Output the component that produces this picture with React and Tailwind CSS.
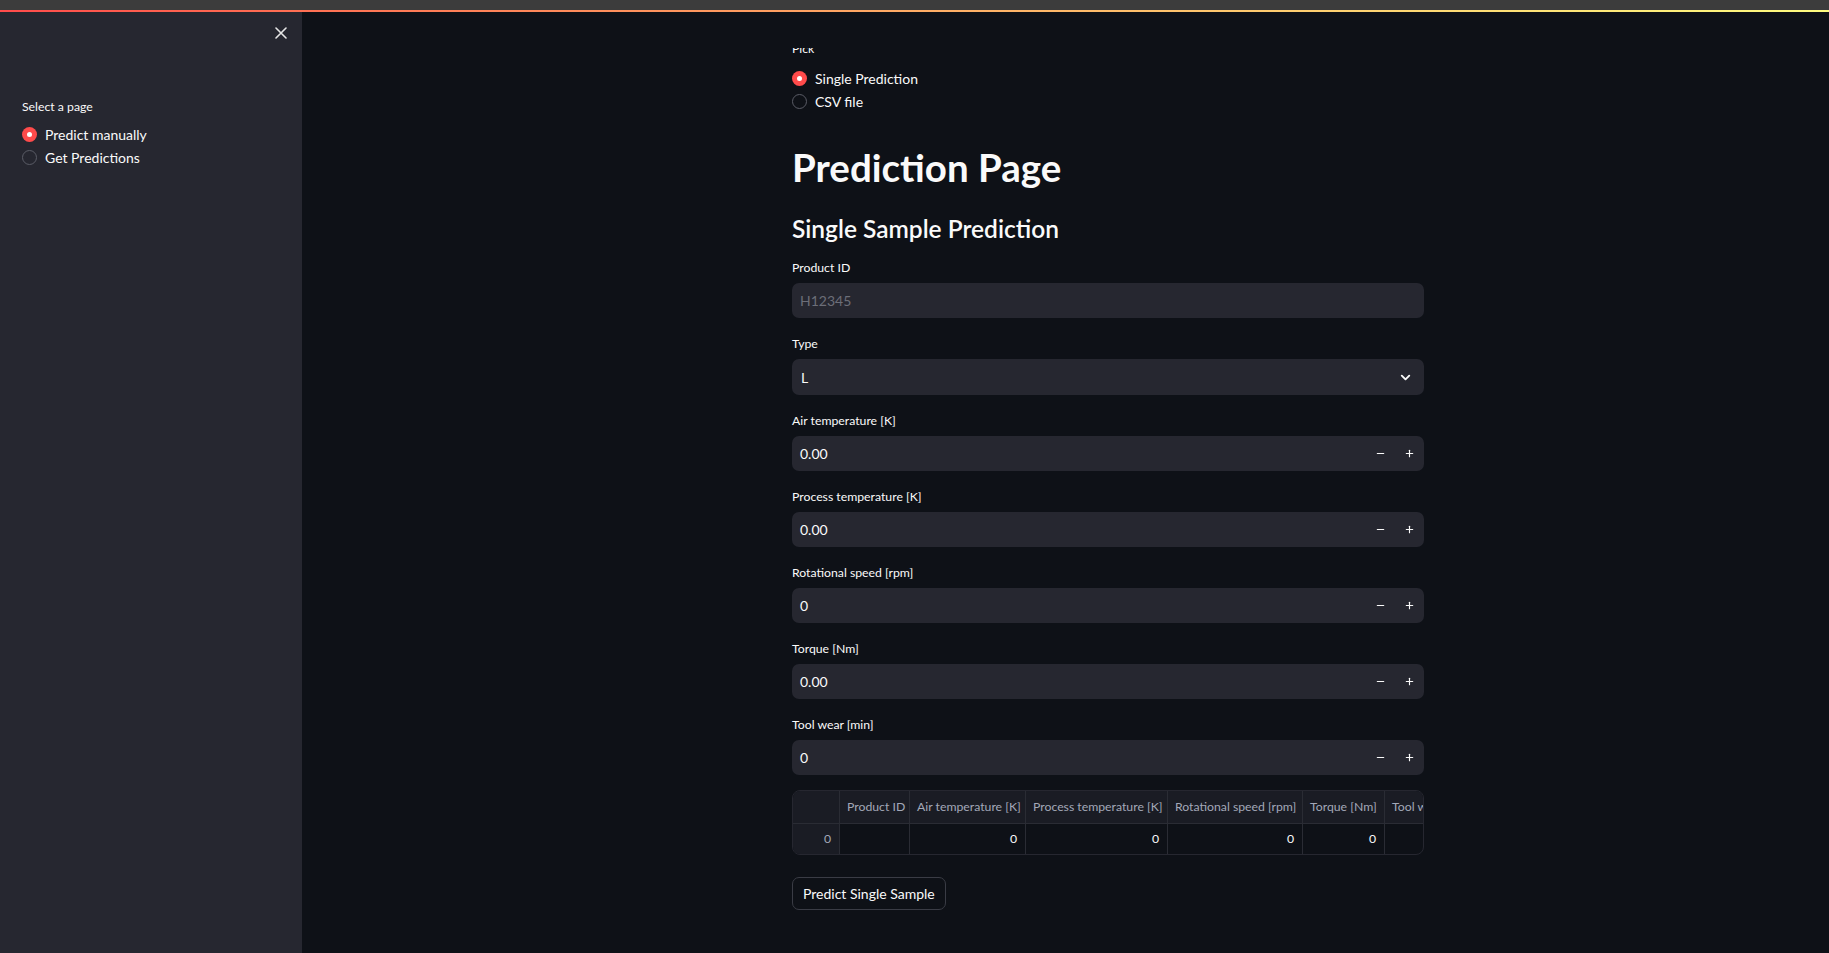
import { ChevronDown, Minus, Plus } from "lucide-react";

const font = { fontFamily: "Lato, 'Noto Sans', sans-serif" };

const fields = [
  { label: "Air temperature [K]", value: "0.00" },
  { label: "Process temperature [K]", value: "0.00" },
  { label: "Rotational speed [rpm]", value: "0" },
  { label: "Torque [Nm]", value: "0.00" },
  { label: "Tool wear [min]", value: "0" },
];

const columns = [
  { name: "", w: "w-[46px]", val: "0", index: true },
  { name: "Product ID", w: "w-[70px]", val: "" },
  { name: "Air temperature [K]", w: "w-[116px]", val: "0" },
  { name: "Process temperature [K]", w: "w-[142px]", val: "0" },
  { name: "Rotational speed [rpm]", w: "w-[135px]", val: "0" },
  { name: "Torque [Nm]", w: "w-[82px]", val: "0" },
  { name: "Tool wear [min]", w: "w-[110px]", val: "" },
];

function Radio({ checked, label }) {
  return (
    <div className="flex items-center h-[23px] gap-2">
      {checked ? (
        <span className="w-[15px] h-[15px] rounded-full bg-[#ff4b4b] flex items-center justify-center shrink-0">
          <span className="w-[5px] h-[5px] rounded-full bg-white" />
        </span>
      ) : (
        <span className="w-[15px] h-[15px] rounded-full border border-[#5a5c66] shrink-0" />
      )}
      <span className="text-[14px] text-[#fafafa]">{label}</span>
    </div>
  );
}

function Label({ children }) {
  return <p className="text-[12.25px] leading-[16px] text-[#fafafa]">{children}</p>;
}

function NumberField({ label, value }) {
  return (
    <div className="flex flex-col gap-[7px]">
      <Label>{label}</Label>
      <div className="h-[35px] rounded-[7px] bg-[#262730] flex items-center pl-[8px]">
        <span className="flex-1 text-[14px] text-[#fafafa]">{value}</span>
        <span className="w-[29px] h-full flex items-center justify-center text-[#fafafa]">
          <Minus size={11} strokeWidth={2.5} />
        </span>
        <span className="w-[29px] h-full flex items-center justify-center text-[#fafafa]">
          <Plus size={11} strokeWidth={2.5} />
        </span>
      </div>
    </div>
  );
}

export default function App() {
  return (
    <div className="w-full h-screen flex flex-col bg-[#0e1117] overflow-hidden" style={font}>
      <div className="h-[10px] bg-[#3c3c3c] shrink-0" />
      <div className="h-[2px] bg-gradient-to-r from-[#ff4b4b] to-[#fffd80] shrink-0" />
      <div className="flex flex-1 min-h-0">
        {/* Sidebar */}
        <aside className="w-[302px] shrink-0 bg-[#262730] flex flex-col">
          <div className="flex justify-end pr-[15px] pt-[14px] h-[87px]">
            <svg width="12" height="12" viewBox="0 0 12 12" className="mt-[1px]">
              <path d="M1 1 L11 11 M11 1 L1 11" stroke="#e6e6e6" strokeWidth="1.6" strokeLinecap="round" />
            </svg>
          </div>
          <div className="pl-[22px] flex flex-col">
            <p className="text-[12.25px] leading-[16px] text-[#fafafa]">Select a page</p>
            <div className="flex flex-col mt-[8px]">
              <Radio checked label="Predict manually" />
              <Radio label="Get Predictions" />
            </div>
          </div>
        </aside>

        {/* Main */}
        <main className="flex-1 flex flex-col min-w-0">
          <div className="h-[36px] shrink-0 bg-[#0e1117]" />
          <div className="flex-1 overflow-hidden">
            <div className="ml-[490px] w-[632px] mt-[-7px] flex flex-col">
              <Label>Pick</Label>
              <div className="flex flex-col mt-[10px]">
                <Radio checked label="Single Prediction" />
                <Radio label="CSV file" />
              </div>

              <h1 className="mt-[31px] text-[38.5px] leading-[46px] font-bold text-[#fafafa]">
                Prediction Page
              </h1>
              <h3 className="mt-[24px] text-[24.5px] leading-[29px] font-semibold text-[#fafafa]">
                Single Sample Prediction
              </h3>

              <div className="mt-[17px] flex flex-col gap-[18px]">
                <div className="flex flex-col gap-[7px]">
                  <Label>Product ID</Label>
                  <div className="h-[35px] rounded-[7px] bg-[#262730] flex items-center px-[8px]">
                    <span className="text-[14px] text-[#6c6e78]">H12345</span>
                  </div>
                </div>
                <div className="flex flex-col gap-[7px]">
                  <Label>Type</Label>
                  <div className="h-[36px] rounded-[7px] bg-[#262730] flex items-center pl-[9px] pr-[11px]">
                    <span className="flex-1 text-[14px] text-[#fafafa]">L</span>
                    <ChevronDown size={15} strokeWidth={3} className="text-[#fafafa]" />
                  </div>
                </div>
                {fields.map((f) => (
                  <NumberField key={f.label} label={f.label} value={f.value} />
                ))}
              </div>

              {/* Data table */}
              <div className="mt-[15px] h-[65px] rounded-[8px] border border-[#262730] overflow-hidden">
                <div className="flex">
                  {columns.map((c, i) => (
                    <div key={i} className={`${c.w} shrink-0 flex flex-col ${i > 0 ? "border-l border-[#2a2c34]" : ""}`}>
                      <div className="h-[33px] bg-[#1a1c24] border-b border-[#2a2c34] flex items-center px-[7px] text-[12.25px] text-[#a3a8b8] whitespace-nowrap overflow-hidden">
                        {c.name}
                      </div>
                      <div
                        className={`h-[30px] flex items-center justify-end px-[8px] text-[12.25px] ${
                          c.index ? "text-[#a3a8b8] bg-[#1a1c24]" : "text-[#fafafa]"
                        }`}
                      >
                        {c.val}
                      </div>
                    </div>
                  ))}
                </div>
              </div>

              <div className="mt-[22px]">
                <button className="h-[33px] px-[10px] rounded-[7px] border border-[#3a3c45] bg-[#0e1117] text-[14px] text-[#fafafa]">
                  Predict Single Sample
                </button>
              </div>
            </div>
          </div>
        </main>
      </div>
    </div>
  );
}
